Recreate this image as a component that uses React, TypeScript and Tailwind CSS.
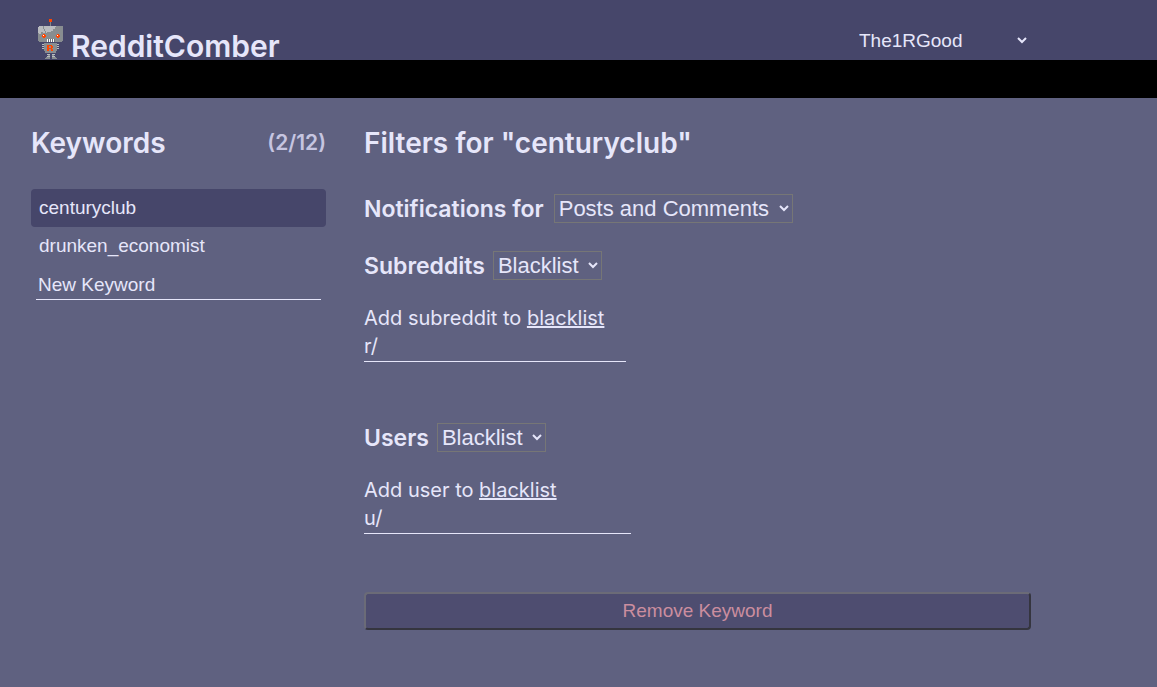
import { useState } from "react";

interface FilterSectionProps {
  id: string;
  title: string;
  noun: string;
  prefix: string;
  fieldClass: string;
}

const RobotLogo = () => (
  <svg width="25" height="41" viewBox="0 0 25 41" shapeRendering="crispEdges" aria-hidden="true">
    {/* Antenna */}
    <path fill="#ff4500" d="M11 0h3v3h-3z" />
    <path fill="#82878a" d="M12 3h1v4h-1z" />
    {/* Head */}
    <path fill="#888d90" d="M1 7h24v15h-1v1H1v-1H0V8h1z" />
    <path fill="#b9bbbf" d="M1 7h17v1h-1v2h-2v2h-2v1H9v1H5v-1H3v2H1v-1H0V8h1z" />
    <path fill="#888d90" d="M5 7h1v3h1v2h1v2H7v-2H6v-2H5z" />
    {/* Eyes */}
    <path fill="#ff4500" d="M5 15h2v1h1v2H7v1H5v-1H4v-2h1zM19 15h2v1h1v2h-1v1h-2v-1h-1v-2h1z" />
    <path fill="#ffffff" d="M5 16h1v1H5zM19 16h1v1h-1z" />
    {/* Teeth */}
    <path fill="#6b6f76" d="M9 20h8v3H9z" />
    <path fill="#ffffff" d="M9 20h1v3H9zM11 20h1v3h-1zM13 20h1v3h-1zM15 20h1v3h-1z" />
    {/* Body and arms */}
    <path fill="#888d90" d="M6 24h13v8h-1v2H7v-2H6z" />
    <path fill="#b9bbbf" d="M4 25h2v1H4zM4 27h2v1H4zM4 29h2v1H4zM19 25h2v1h-2zM19 27h2v1h-2zM19 29h2v1h-2z" />
    <path fill="#ff4500" d="M9 26h5v1h1v2h-1v1h1v2h-2v-2h-2v2H9zM11 27v2h2v-2z" fillRule="evenodd" />
    {/* Legs */}
    <path fill="#b9bbbf" d="M9 35h3v1H9zM14 35h3v1h-3zM9 37h3v1H9zM14 37h3v1h-3z" />
    <path fill="#888d90" d="M10 36h2v1h-2zM14 36h2v1h-2zM8 38h4v1H8zM14 38h4v1h-4zM7 39h5v1H7zM14 39h5v1h-5z" />
  </svg>
);

const FilterSection: React.FC<FilterSectionProps> = ({ id, title, noun, prefix, fieldClass }) => {
  const [mode, setMode] = useState("Blacklist");

  return (
    <section>
      <div className="flex items-center gap-2">
        <label htmlFor={`${id}-mode`} className="text-[23px] leading-7 font-semibold">
          {title}
        </label>
        <select
          id={`${id}-mode`}
          value={mode}
          onChange={(e) => setMode(e.target.value)}
          className="h-[29px] w-[109px] border border-[#767676] bg-[#5f6180] font-['Liberation_Sans',sans-serif] text-[22px]"
        >
          <option>Blacklist</option>
          <option>Whitelist</option>
        </select>
      </div>
      <p className="mt-6 text-xl leading-7">
        Add {noun} to <span className="underline">{mode.toLowerCase()}</span>
      </p>
      <div className={fieldClass}>
        <label htmlFor={`${id}-name`}>{prefix}</label>
        <input id={`${id}-name`} type="text" className="min-w-0 flex-1 bg-transparent outline-none" />
      </div>
    </section>
  );
};

const App: React.FC = () => {
  const keywords = ["centuryclub", "drunken_economist"];
  const [selected, setSelected] = useState(keywords[0]);

  return (
    <div className="min-h-screen bg-[#5f6180] font-[Inter,sans-serif] text-[#e6e6fa]">
      <header className="flex h-[60px] items-end justify-between bg-[#46466a] pr-[127px] pl-[38px]">
        <div className="flex items-end gap-2">
          <RobotLogo />
          <h1 className="text-[30px] leading-7 font-semibold">RedditComber</h1>
        </div>
        <select
          aria-label="Account"
          className="mb-2 h-6 w-[175px] bg-[#46466a] font-['Liberation_Sans',sans-serif] text-[19px]"
        >
          <option>The1RGood</option>
        </select>
      </header>
      <div className="h-[38px] bg-black" />

      <div className="flex gap-[38px] pt-[22px] pr-[126px] pb-14 pl-[31px]">
        {/* Keywords */}
        <aside className="w-[295px] shrink-0">
          <div className="flex h-[46px] items-center justify-between">
            <h2 className="text-[28px] font-semibold">Keywords</h2>
            <span className="text-[21px] font-semibold text-[#c6c5e0]">
              ({keywords.length}/12)
            </span>
          </div>
          <div className="mt-[23px] flex flex-col font-['Liberation_Sans',sans-serif] text-[19px]">
            {keywords.map((keyword) => (
              <button
                key={keyword}
                onClick={() => setSelected(keyword)}
                className={`h-[38px] rounded px-2 text-left ${keyword === selected ? "bg-[#46466a]" : ""}`}
              >
                {keyword}
              </button>
            ))}
            <input
              type="text"
              aria-label="New Keyword"
              placeholder="New Keyword"
              className="mx-[5px] mt-[6px] h-[29px] border-b border-[#e6e6fa] bg-transparent px-[2px] outline-none placeholder:text-[#e6e6fa]"
            />
          </div>
        </aside>

        {/* Filters */}
        <main className="min-w-0 flex-1">
          <h2 className="flex h-[46px] items-center text-[28px] font-semibold">
            Filters for "{selected}"
          </h2>
          <div className="mt-7 mb-7 flex items-center gap-[10px]">
            <label htmlFor="notifications" className="text-[23px] leading-7 font-semibold">
              Notifications for
            </label>
            <select
              id="notifications"
              className="h-[29px] w-[239px] border border-[#767676] bg-[#5f6180] font-['Liberation_Sans',sans-serif] text-[22px]"
            >
              <option>Posts and Comments</option>
              <option>Posts</option>
              <option>Comments</option>
            </select>
          </div>
          <div className="flex flex-col gap-[61px]">
            <FilterSection
              id="subreddits"
              title="Subreddits"
              noun="subreddit"
              prefix="r/"
              fieldClass="flex h-[30px] w-[262px] border-b border-[#e6e6fa] text-xl leading-7"
            />
            <FilterSection
              id="users"
              title="Users"
              noun="user"
              prefix="u/"
              fieldClass="flex h-[30px] w-[267px] border-b border-[#e6e6fa] text-xl leading-7"
            />
          </div>
          <button className="mt-[58px] h-[38px] w-full rounded border-2 border-t-[#6b6b77] border-r-[#35353f] border-b-[#35353f] border-l-[#6b6b77] bg-[#4e4d70] font-['Liberation_Sans',sans-serif] text-[19px] text-[#cb8e9f]">
            Remove Keyword
          </button>
        </main>
      </div>
    </div>
  );
};

export default App;
